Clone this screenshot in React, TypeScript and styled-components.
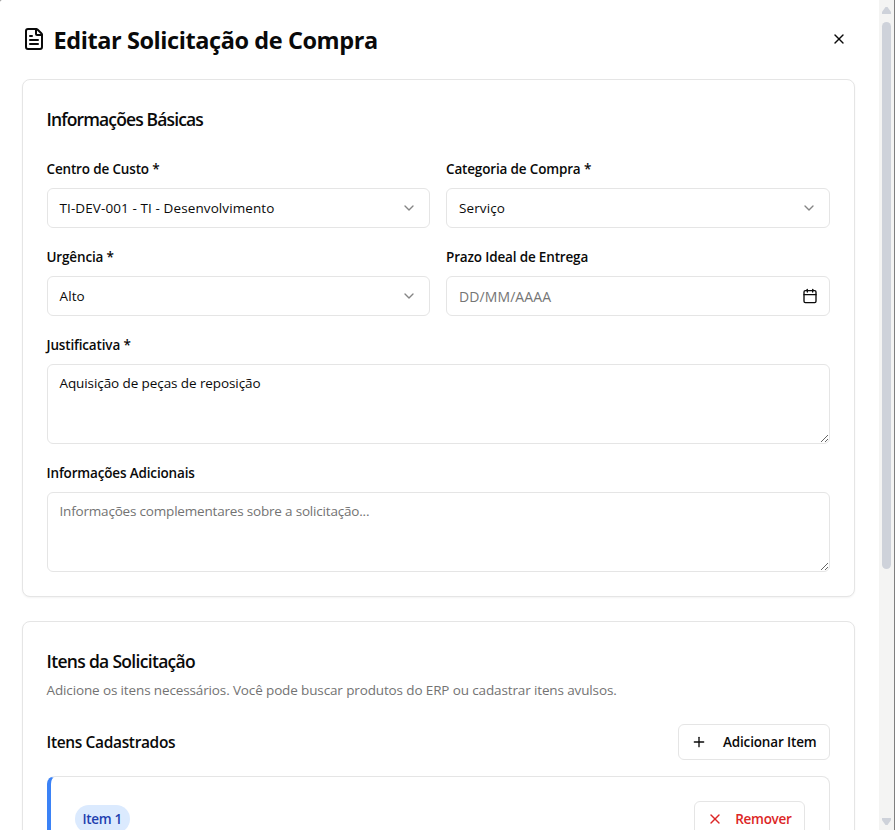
import React from "react";
import styled, { createGlobalStyle } from "styled-components";
import { Calendar, ChevronDown, FileText, Plus, X } from "lucide-react";

const GlobalStyle = createGlobalStyle`
  *, *::before, *::after { box-sizing: border-box; }
  html, body { margin: 0; padding: 0; overflow: hidden; background: #7f7f7f; }
  body, input, textarea, button {
    font-family: "Segoe UI", "Open Sans", "Noto Sans", sans-serif;
    color: #0a0a0a;
  }
  h1, h2, h3, p { margin: 0; }
`;

const Window = styled.div`
  display: flex;
  width: 895px;
  height: 830px;
  overflow: hidden;
  border-right: 1px solid #7f7f7f;
  border-top-left-radius: 2px;
  background: #fff;
`;

const Content = styled.main`
  flex: 1;
  min-width: 0;
  height: 830px;
  overflow: hidden;
  padding: 22px 24.5px 0 21.5px;
`;

const Header = styled.header`
  display: flex;
  align-items: center;
  height: 36px;
  margin-bottom: 21px;
  padding-left: 0.5px;
  svg { display: block; flex: none; }
`;

const TitleIcon = styled(FileText)`
  margin-bottom: 2px;
`;

const Title = styled.h1`
  flex: 1;
  margin-left: 7.5px;
  font-size: 23.5px;
  line-height: 32px;
  font-weight: 700;
  letter-spacing: -0.42px;
  white-space: nowrap;
`;

const CloseButton = styled.button`
  display: flex;
  padding: 0;
  margin: 0 7.5px 2px 0;
  border: 0;
  background: none;
`;

const Card = styled.section`
  border: 1px solid #e5e5e5;
  border-radius: 8px;
  padding: 24px;
  margin-bottom: 24px;
  background: #fff;
  box-shadow: 0 1px 2px rgba(0, 0, 0, 0.05);
`;

const CardTitle = styled.h2<{ $track?: number }>`
  height: 28px;
  padding-top: 1px;
  font-size: 17.5px;
  line-height: 28px;
  font-weight: 600;
  letter-spacing: ${(p) => p.$track ?? 0}px;
  white-space: nowrap;
`;

const CardDescription = styled.p`
  margin-top: 6px;
  font-size: 13.5px;
  line-height: 20px;
  letter-spacing: -0.13px;
  color: #737373;
  white-space: nowrap;
`;

const FieldGrid = styled.div`
  display: grid;
  grid-template-columns: 1fr 1fr;
  gap: 16px;
  margin-top: 24px;
`;

const Field = styled.div<{ $wide?: boolean }>`
  display: flex;
  flex-direction: column;
  gap: 8px;
  grid-column: ${(p) => (p.$wide ? "1 / -1" : "auto")};
`;

const Label = styled.label`
  height: 24px;
  padding-top: 1px;
  font-size: 13.5px;
  line-height: 24px;
  font-weight: 600;
  letter-spacing: -0.16px;
  white-space: nowrap;
`;

const Control = styled.div`
  display: flex;
  align-items: center;
  justify-content: space-between;
  height: 40px;
  padding: 0 12px;
  border: 1px solid #e5e5e5;
  border-radius: 6px;
`;

const Value = styled.span`
  font-size: 13.5px;
  line-height: 20px;
  letter-spacing: 0.1px;
`;

const DateInput = styled.input`
  flex: 1;
  min-width: 0;
  padding: 1px 0 0;
  border: 0;
  outline: 0;
  background: none;
  font-size: 14px;
  letter-spacing: 0.1px;
  &::placeholder { color: #757575; }
`;

const CalendarIcon = styled(Calendar)`
  margin-right: -1px;
`;

const TextArea = styled.textarea`
  display: block;
  width: 100%;
  height: 80px;
  padding: 8px 12px;
  border: 1px solid #e5e5e5;
  border-radius: 6px;
  outline: 0;
  resize: vertical;
  font-size: 13.5px;
  line-height: 20px;
  letter-spacing: -0.09px;
  &::placeholder { color: #737373; letter-spacing: -0.19px; }
`;

const ListHeader = styled.div`
  display: flex;
  align-items: center;
  justify-content: space-between;
  margin: 24px 0 16px;
`;

const ListTitle = styled.h3`
  font-size: 15.5px;
  line-height: 24px;
  font-weight: 600;
  letter-spacing: -0.35px;
`;

const OutlineButton = styled.button<{ $danger?: boolean; $width: number }>`
  display: flex;
  align-items: center;
  justify-content: space-between;
  width: ${(p) => p.$width}px;
  height: 36px;
  padding: 0 12px;
  border: 1px solid #e5e5e5;
  border-radius: 6px;
  background: #fff;
  color: ${(p) => (p.$danger ? "#dc2626" : "#0a0a0a")};
  font-size: 13.5px;
  font-weight: 600;
  letter-spacing: ${(p) => (p.$danger ? -0.3 : -0.15)}px;
  white-space: nowrap;
`;

const ItemCard = styled.div`
  display: flex;
  align-items: flex-start;
  justify-content: space-between;
  height: 220px;
  padding: 24px;
  border: 1px solid #e5e5e5;
  border-left: 4px solid #3b82f6;
  border-radius: 8px;
`;

const Badge = styled.span`
  margin-top: 4px;
  padding: 4px 7.5px 4px 8px;
  border-radius: 14px;
  background: #dbeafe;
  color: #1e40af;
  font-size: 13.5px;
  line-height: 20px;
  font-weight: 600;
  letter-spacing: -0.3px;
`;

const ScrollTrack = styled.div`
  display: flex;
  flex-direction: column;
  align-items: center;
  width: 15px;
  height: 830px;
  padding: 7px 0 5px;
  background: #f4f4f3;
  svg { display: block; }
`;

const Thumb = styled.div`
  width: 9px;
  height: 547px;
  margin: 8px 0 auto;
  border-radius: 5px;
  background: #ced2da;
`;

function SelectField({ label, value }: { label: string; value: string }) {
  return (
    <Field>
      <Label>{label}</Label>
      <Control>
        <Value>{value}</Value>
        <ChevronDown size={16} color="#858585" />
      </Control>
    </Field>
  );
}

export default function App() {
  return (
    <>
      <GlobalStyle />
      <Window>
        <Content>
          <Header>
            <TitleIcon size={24} />
            <Title>Editar Solicitação de Compra</Title>
            <CloseButton aria-label="Fechar">
              <X size={16} />
            </CloseButton>
          </Header>

          <Card>
            <CardTitle $track={-0.86}>Informações Básicas</CardTitle>
            <FieldGrid>
              <SelectField label="Centro de Custo *" value="TI-DEV-001 - TI - Desenvolvimento" />
              <SelectField label="Categoria de Compra *" value="Serviço" />
              <SelectField label="Urgência *" value="Alto" />
              <Field>
                <Label>Prazo Ideal de Entrega</Label>
                <Control>
                  <DateInput placeholder="DD/MM/AAAA" />
                  <CalendarIcon size={16} />
                </Control>
              </Field>
              <Field $wide>
                <Label>Justificativa *</Label>
                <TextArea defaultValue="Aquisição de peças de reposição" spellCheck={false} />
              </Field>
              <Field $wide>
                <Label>Informações Adicionais</Label>
                <TextArea placeholder="Informações complementares sobre a solicitação..." />
              </Field>
            </FieldGrid>
          </Card>

          <Card>
            <CardTitle $track={-0.69}>Itens da Solicitação</CardTitle>
            <CardDescription>
              Adicione os itens necessários. Você pode buscar produtos do ERP ou cadastrar itens avulsos.
            </CardDescription>
            <ListHeader>
              <ListTitle>Itens Cadastrados</ListTitle>
              <OutlineButton $width={152}>
                <Plus size={16} />
                Adicionar Item
              </OutlineButton>
            </ListHeader>
            <ItemCard>
              <Badge>Item 1</Badge>
              <OutlineButton $danger $width={111}>
                <X size={16} />
                Remover
              </OutlineButton>
            </ItemCard>
          </Card>
        </Content>

        <ScrollTrack>
          <svg width="9" height="7" viewBox="0 0 9 7">
            <path d="M3.5 0H5.5L9 5V7H0V5Z" fill="#ced2da" />
          </svg>
          <Thumb />
          <svg width="9" height="7" viewBox="0 0 9 7">
            <path d="M0 0H9V2L5.5 7H3.5L0 2Z" fill="#ced2da" />
          </svg>
        </ScrollTrack>
      </Window>
    </>
  );
}
